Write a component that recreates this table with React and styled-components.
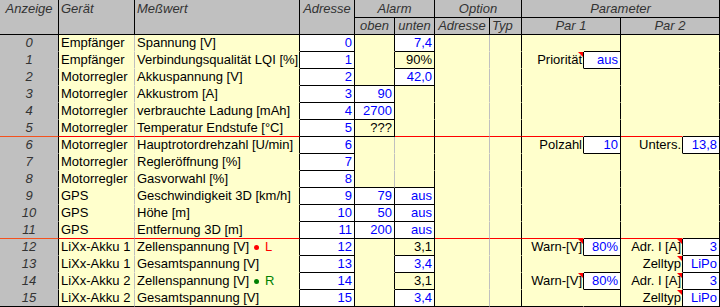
import React from "react";
import styled, { createGlobalStyle } from "styled-components";

const YELLOW = "#ffffcc"
const GRAY = "#c0c0c0"
const BLACK = "#000000"
const RED = "#ff0000"
const ORANGE = "#f4511e"
const BLUE = "#0000ff"

const GlobalStyle = createGlobalStyle`
  * { box-sizing: border-box; }
  html, body {
    margin: 0;
    padding: 0;
    background: #fff;
  }
  body {
    font-family: "Liberation Sans", Arial, sans-serif;
    font-size: 13px;
  }
`

const Sheet = styled.div`
  display: grid;
  grid-template-columns: 59px 76px 165px 55px 40px 40px 55px 32px 62px 37px 62px 37px;
  grid-template-rows: 18px 17px;
  grid-auto-rows: 17px;
  width: 720px;
`

const Head = styled.div`
  grid-column: ${(p) => p.$col} / span ${(p) => p.$span || 1};
  grid-row: ${(p) => p.$row} / span ${(p) => p.$rows || 1};
  background: ${GRAY};
  border-right: 1px solid ${BLACK};
  border-bottom: 1px solid ${BLACK};
  color: #333;
  font-style: italic;
  text-align: ${(p) => p.$align || "center"};
  padding: ${(p) => (p.$row === 1 ? "1px 2px 0" : "0 2px")};
  line-height: 16px;
  white-space: nowrap;
  overflow: hidden;
`

const Cell = styled.div`
  position: relative;
  background: ${(p) => p.$bg || YELLOW};
  border-right: 1px solid ${(p) => p.$right};
  border-bottom: 1px solid ${(p) => p.$bottom};
  line-height: 16px;
  white-space: nowrap;
  overflow: hidden;
  padding: 0 2px;
`

const IndexCell = styled(Cell)`
  font-style: italic;
  color: #333;
  text-align: center;
`

const TextCell = styled(Cell)`
  color: #000;
  text-align: left;
`

const ValueCell = styled(Cell)`
  color: ${(p) => (p.$yellow ? "#000" : BLUE)};
  text-align: right;
`

const LabelCell = styled(Cell)`
  color: #000;
  text-align: right;
  padding-right: 1px;
`

const Note = styled.span`
  position: absolute;
  top: 0;
  right: 0;
  width: 0;
  height: 0;
  border-top: 5px solid ${RED};
  border-left: 5px solid transparent;
`

const Dot = styled.span`
  display: inline-block;
  width: 5px;
  height: 5px;
  border-radius: 50%;
  background: ${(p) => p.$color};
  margin: 0 6px 0 5px;
  vertical-align: middle;
`

const Mark = styled.span`
  color: ${(p) => p.$color};
`

const box = (text, yellow) => ({ box: true, text, yellow })
const label = (text, note = true) => ({ label: true, text, note })

const rows = [
  { dev: "Empfänger", val: "Spannung [V]", unten: box("7,4") },
  { dev: "Empfänger", val: "Verbindungsqualität LQI [%]", unten: box("90%", true), p1: [label("Priorität"), box("aus")] },
  { dev: "Motorregler", val: "Akkuspannung [V]", unten: box("42,0") },
  { dev: "Motorregler", val: "Akkustrom [A]", oben: box("90") },
  { dev: "Motorregler", val: "verbrauchte Ladung [mAh]", oben: box("2700") },
  { dev: "Motorregler", val: "Temperatur Endstufe [°C]", oben: box("???", true) },
  { dev: "Motorregler", val: "Hauptrotordrehzahl [U/min]", p1: [label("Polzahl", false), box("10")], p2: [label("Unters.", false), box("13,8")] },
  { dev: "Motorregler", val: "Regleröffnung [%]" },
  { dev: "Motorregler", val: "Gasvorwahl [%]" },
  { dev: "GPS", val: "Geschwindigkeit 3D [km/h]", oben: box("79"), unten: box("aus") },
  { dev: "GPS", val: "Höhe [m]", oben: box("50"), unten: box("aus") },
  { dev: "GPS", val: "Entfernung 3D [m]", oben: box("200"), unten: box("aus") },
  { dev: "LiXx-Akku 1", val: "Zellenspannung [V]", mark: { color: RED, letter: "L" }, unten: box("3,1", true), p1: [label("Warn-[V]"), box("80%")], p2: [label("Adr. I [A]"), box("3")] },
  { dev: "LiXx-Akku 1", val: "Gesamtspannung [V]", unten: box("3,4"), p2: [label("Zelltyp"), box("LiPo")] },
  { dev: "LiXx-Akku 2", val: "Zellenspannung [V]", mark: { color: "#008000", letter: "R" }, unten: box("3,1", true), p1: [label("Warn-[V]"), box("80%")], p2: [label("Adr. I [A]"), box("3")] },
  { dev: "LiXx-Akku 2", val: "Gesamtspannung [V]", unten: box("3,4"), p2: [label("Zelltyp"), box("LiPo")] },
]

// one entry per spreadsheet column (Par 1 / Par 2 are split into label + value)
const grid = rows.map((r, i) => [
  { index: true, text: i },
  { text: r.dev },
  { text: r.val, mark: r.mark },
  box(String(i)),
  r.oben || null,
  r.unten || null,
  null,
  null,
  r.p1 ? r.p1[0] : null,
  r.p1 ? r.p1[1] : null,
  r.p2 ? r.p2[0] : null,
  r.p2 ? r.p2[1] : null,
])

const baseRight = [BLACK, GRAY, BLACK, BLACK, GRAY, BLACK, GRAY, BLACK, YELLOW, BLACK, YELLOW, BLACK]
const separators = [5, 11]

const isBox = (r, c) => !!(grid[r] && grid[r][c] && grid[r][c].box)

const rightColor = (r, c) => {
  if (isBox(r, c) || isBox(r, c + 1)) return BLACK
  return baseRight[c]
}

const bottomColor = (r, c) => {
  if (r === grid.length - 1) return BLACK
  if (isBox(r, c) || isBox(r + 1, c)) return BLACK
  if (separators.includes(r)) return c === 0 ? ORANGE : RED
  return c === 0 ? GRAY : isBox(r, c) ? BLACK : YELLOW
}

const renderCell = (cell, r, c) => {
  const borders = { $right: rightColor(r, c), $bottom: bottomColor(r, c) }
  const key = r + "-" + c

  if (!cell) return <Cell key={key} {...borders} />

  if (cell.index) {
    return <IndexCell key={key} $bg={GRAY} {...borders}>{cell.text}</IndexCell>
  }

  if (cell.box) {
    return (
      <ValueCell key={key} $bg={cell.yellow ? YELLOW : "#fff"} $yellow={cell.yellow} {...borders}>
        {cell.text}
      </ValueCell>
    )
  }

  if (cell.label) {
    return (
      <LabelCell key={key} {...borders}>
        {cell.text}
        {cell.note && <Note />}
      </LabelCell>
    )
  }

  return (
    <TextCell key={key} {...borders}>
      {cell.text}
      {cell.mark && (
        <>
          <Dot $color={cell.mark.color} />
          <Mark $color={cell.mark.color}>{cell.mark.letter}</Mark>
        </>
      )}
    </TextCell>
  )
}

const App = () => {
  return (
    <>
      <GlobalStyle />
      <Sheet>
        <Head $col={1} $row={1} $rows={2}>Anzeige</Head>
        <Head $col={2} $row={1} $rows={2} $align="left">Gerät</Head>
        <Head $col={3} $row={1} $rows={2} $align="left">Meßwert</Head>
        <Head $col={4} $row={1} $rows={2}>Adresse</Head>
        <Head $col={5} $row={1} $span={2}>Alarm</Head>
        <Head $col={7} $row={1} $span={2}>Option</Head>
        <Head $col={9} $row={1} $span={4}>Parameter</Head>
        <Head $col={5} $row={2}>oben</Head>
        <Head $col={6} $row={2}>unten</Head>
        <Head $col={7} $row={2}>Adresse</Head>
        <Head $col={8} $row={2} $align="left">Typ</Head>
        <Head $col={9} $row={2} $span={2}>Par 1</Head>
        <Head $col={11} $row={2} $span={2}>Par 2</Head>

        {grid.map((cells, r) => cells.map((cell, c) => renderCell(cell, r, c)))}
      </Sheet>
    </>
  )
}

export default App;
